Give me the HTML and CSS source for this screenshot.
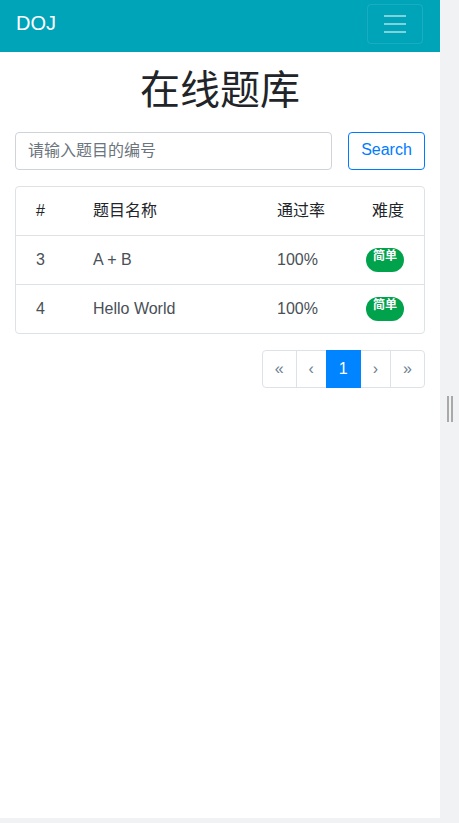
FILE: index.html
```html
<!DOCTYPE html>
<html lang="zh">
<head>
<meta charset="utf-8">
<title>DOJ - 在线题库</title>
<link rel="stylesheet" href="styles.css">
</head>
<body>
<div class="app">
  <div class="panel">
    <nav class="navbar">
      <a class="brand" href="#">DOJ</a>
      <button class="toggler" type="button" aria-label="menu">
        <svg width="30" height="30" viewBox="0 0 30 30"><path d="M4 7h22M4 15h22M4 23h22" stroke="rgba(255,255,255,0.5)" stroke-width="2" stroke-linecap="butt" fill="none"/></svg>
      </button>
    </nav>
    <h1 class="title">在线题库</h1>
    <div class="search">
      <input class="search-input" type="text" placeholder="请输入题目的编号">
      <button class="search-btn" type="button">Search</button>
    </div>
    <div class="table-card">
      <table class="problems">
        <colgroup>
          <col class="c1"><col class="c2"><col class="c3"><col class="c4">
        </colgroup>
        <thead>
          <tr><th>#</th><th>题目名称</th><th>通过率</th><th>难度</th></tr>
        </thead>
        <tbody>
          <tr><td>3</td><td>A + B</td><td>100%</td><td><span class="badge">简单</span></td></tr>
          <tr><td>4</td><td>Hello World</td><td>100%</td><td><span class="badge">简单</span></td></tr>
        </tbody>
      </table>
    </div>
    <div class="pager">
      <ul class="pagination">
        <li class="page"><a href="#">«</a></li>
        <li class="page"><a href="#">‹</a></li>
        <li class="page active"><a href="#">1</a></li>
        <li class="page"><a href="#">›</a></li>
        <li class="page"><a href="#">»</a></li>
      </ul>
    </div>
  </div>
  <div class="splitter"><span class="grip"></span><span class="grip"></span></div>
</div>
</body>
</html>
```
FILE: styles.css
```css
html, body {
  margin: 0;
  padding: 0;
}
body {
  width: 459px;
  height: 823px;
  overflow: hidden;
  background: #f1f2f4;
  font-family: "Liberation Sans", Arial, "Noto Sans CJK SC", sans-serif;
  font-size: 16px;
  line-height: 1.5;
  color: #212529;
}
.app {
  display: flex;
  height: 818px;
}
.panel {
  width: 440px;
  height: 818px;
  background: #fff;
}
.splitter {
  flex: 1;
  display: flex;
  align-items: center;
  justify-content: center;
  gap: 2px;
  padding-left: 1px;
}
.grip {
  width: 2px;
  height: 26px;
  background: #a9a9a9;
}
.navbar {
  height: 52px;
  box-sizing: border-box;
  background: #00a4b9;
  padding: 4px 16px 0;
  display: flex;
  justify-content: space-between;
  align-items: flex-start;
}
.brand {
  color: #fff;
  text-decoration: none;
  font-size: 20px;
  line-height: 30px;
  padding-top: 4px;
}
.toggler {
  width: 56px;
  height: 40px;
  box-sizing: border-box;
  border: 1px solid rgba(255,255,255,0.1);
  border-radius: 4px;
  background: transparent;
  padding: 0;
  display: flex;
  align-items: center;
  justify-content: center;
  margin-right: 1px;
}
.toggler svg {
  display: block;
}
.title {
  margin: 14px 0 0;
  text-align: center;
  font-size: 40px;
  font-weight: 400;
  line-height: 48px;
  font-family: "Liberation Sans", "Noto Sans CJK SC", sans-serif;
  color: #212529;
}
.search {
  display: flex;
  gap: 16px;
  margin: 18px 15px 0;
}
.search-input {
  width: 317px;
  height: 38px;
  box-sizing: border-box;
  border: 1px solid #ced4da;
  border-radius: 4px;
  padding: 6px 12px;
  font: inherit;
  font-size: 16px;
  color: #495057;
}
.search-input::placeholder {
  color: #6c757d;
}
.search-btn {
  width: 77px;
  height: 38px;
  box-sizing: border-box;
  border: 1px solid #007bff;
  border-radius: 4px;
  background: #fff;
  color: #007bff;
  font: inherit;
  font-size: 16px;
  padding: 0 0 2px;
}
.table-card {
  margin: 16px 15px 0;
  border: 1px solid #dee2e6;
  border-radius: 4px;
}
.problems {
  width: 100%;
  border-collapse: collapse;
  table-layout: fixed;
}
.c1 { width: 77px; }
.c2 { width: 184px; }
.c3 { width: 80px; }
.problems th,
.problems td {
  padding: 12px 0;
  height: 24px;
  line-height: 24px;
  text-align: left;
  vertical-align: middle;
}
.problems th {
  font-weight: 400;
  color: #212529;
}
.problems td {
  color: #495057;
  border-top: 1px solid #dee2e6;
}
.problems th:first-child,
.problems td:first-child {
  padding-left: 20px;
}
.problems th:last-child,
.problems td:last-child {
  text-align: right;
  padding-right: 20px;
}
.badge {
  display: inline-block;
  vertical-align: top;
  box-sizing: border-box;
  height: 24px;
  background: #00a24b;
  color: #fff;
  font-size: 12px;
  font-weight: 700;
  line-height: 12px;
  padding: 1px 7px 0;
  border-radius: 12px;
  font-family: "Noto Sans CJK SC", sans-serif;
}
.pager {
  display: flex;
  justify-content: flex-end;
  margin: 16px 15px 0;
}
.pagination {
  display: flex;
  list-style: none;
  margin: 0;
  padding: 0;
}
.page a {
  display: block;
  height: 38px;
  box-sizing: border-box;
  padding: 0 12px;
  line-height: 36px;
  border: 1px solid #dee2e6;
  margin-left: -1px;
  color: #6c7f90;
  text-decoration: none;
  font-size: 16px;
  background: #fff;
}
.page:first-child a {
  margin-left: 0;
  border-radius: 4px 0 0 4px;
}
.page:last-child a {
  border-radius: 0 4px 4px 0;
}
.page.active a {
  background: #0084ff;
  border-color: #0084ff;
  color: #fff;
  position: relative;
}
```
